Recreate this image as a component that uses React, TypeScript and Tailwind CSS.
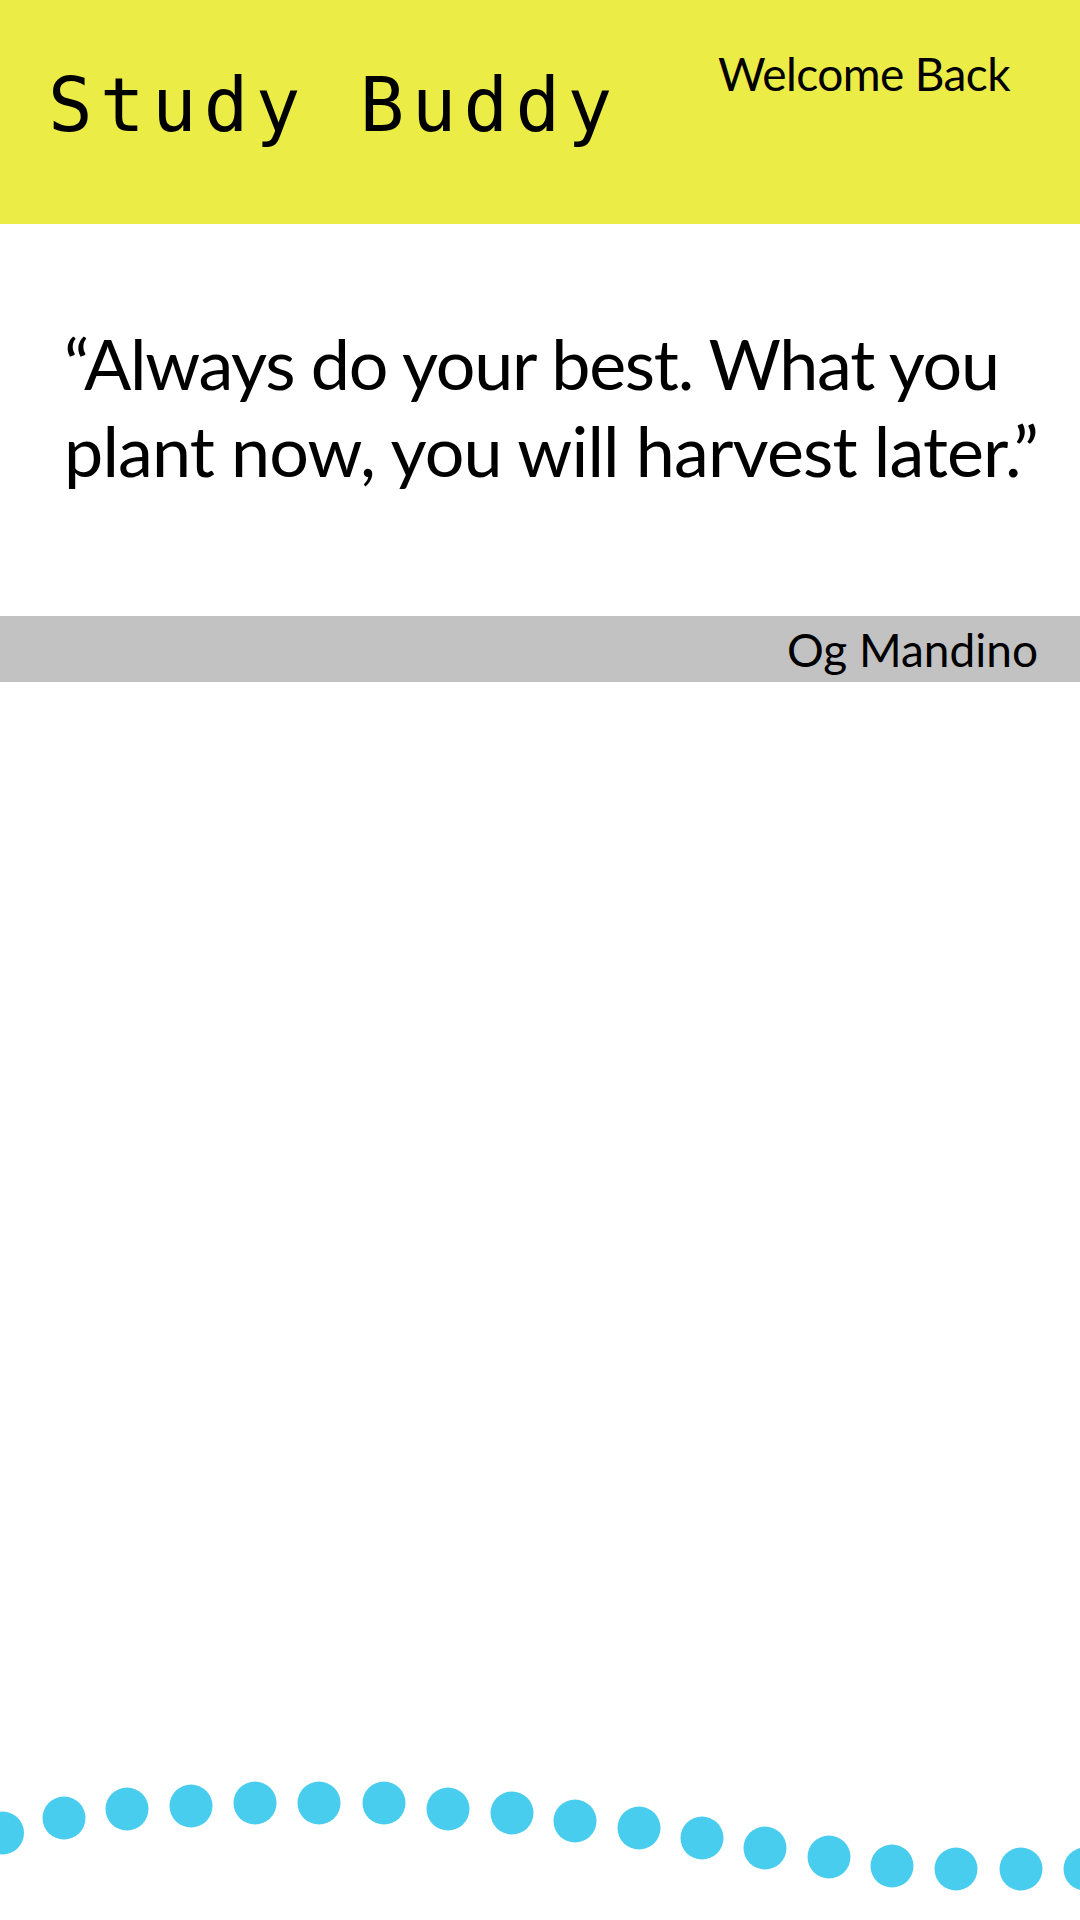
import React from "react";

const dots: [number, number][] = [
  [2.5, 1833 - 1770],
  [64, 1818 - 1770],
  [127, 1809 - 1770],
  [191, 1806 - 1770],
  [255, 1803 - 1770],
  [319, 1803 - 1770],
  [384, 1803 - 1770],
  [448, 1809 - 1770],
  [512, 1813 - 1770],
  [575, 1821 - 1770],
  [639, 1828 - 1770],
  [702, 1838 - 1770],
  [765, 1848 - 1770],
  [829, 1857 - 1770],
  [892, 1866 - 1770],
  [956, 1869 - 1770],
  [1021, 1869 - 1770],
  [1085, 1869 - 1770],
];

export default function App() {
  return (
    <div className="flex h-[1920px] w-[1080px] flex-col bg-white text-black">
      <header className="flex h-[224px] shrink-0 items-start justify-between bg-[#ebec46]">
        <h1
          className="pl-[48px] pt-[68px] text-[74px] leading-none tracking-[7.4px]"
          style={{ fontFamily: '"DejaVu Sans Mono", monospace' }}
        >
          Study Buddy
        </h1>
        <div
          className="pr-[70px] pt-[51px] text-[46px] leading-none tracking-[-0.6px]"
          style={{ fontFamily: 'Lato, "Open Sans", sans-serif' }}
        >
          Welcome Back
        </div>
      </header>

      <main className="flex flex-col">
        <p
          className="mt-[96px] pl-[64px] text-[70px] leading-[87px]"
          style={{ fontFamily: 'Lato, "Open Sans", sans-serif' }}
        >
          <span className="tracking-[-1.3px]">“Always do your best. What you</span>
          <br />
          <span className="tracking-[-0.85px]">plant now, you will harvest later.”</span>
        </p>
        <div className="mt-[122px] flex h-[66px] justify-end bg-[#c2c2c2] pr-[42px] pt-[11px]">
          <span
            className="text-[46px] leading-none"
            style={{ fontFamily: 'Lato, "Open Sans", sans-serif' }}
          >
            Og Mandino
          </span>
        </div>
      </main>

      <div className="mt-auto mb-[20px] h-[130px] w-full">
        <svg width="1080" height="130" viewBox="0 0 1080 130">
          {dots.map(([cx, cy], i) => (
            <circle key={i} cx={cx} cy={cy} r={21.5} fill="#49cdee" />
          ))}
        </svg>
      </div>
    </div>
  );
}
